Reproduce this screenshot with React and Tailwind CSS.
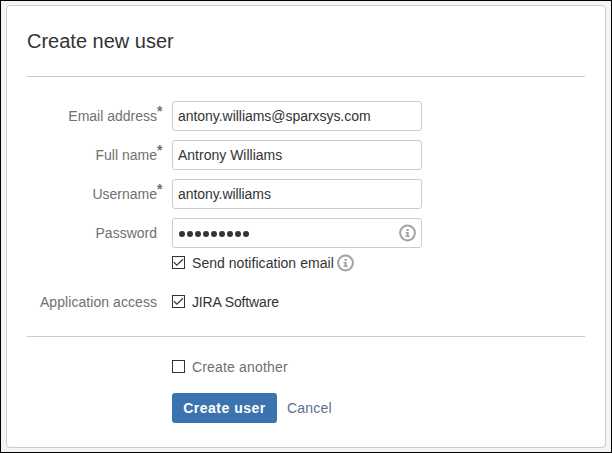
const InfoIcon = ({ className = "" }) => (
  <svg width="17" height="18" viewBox="0 0 17 18" className={`shrink-0 ${className}`} aria-hidden="true">
    <circle cx="8.5" cy="9" r="7.4" fill="none" stroke="#a3a3a6" strokeWidth="2" />
    <path d="M7.5 5h2.2v2H7.5zM6.5 8h3.2v3.7h1V13H6.5v-1.3h1V9.2h-1z" fill="#a3a3a6" />
  </svg>
);

const Checkbox = ({ checked = false }) => (
  <svg width="13" height="13" viewBox="0 0 13 13" className="mb-px shrink-0" role="checkbox" aria-checked={checked}>
    <rect x="0.5" y="0.5" width="12" height="12" fill="#fff" stroke="#333" />
    {checked && <path d="M1.8 6.2 4.8 9.2l6.2-6" fill="none" stroke="#333" strokeWidth="1.2" />}
  </svg>
);

const Row = ({ label, required, children }) => (
  <div className="flex h-[30px]">
    <div className="relative mr-[15px] w-[130px] shrink-0 text-right leading-[30px] text-[#707070]">
      {label}
      {required && <span className="absolute -top-[5px] left-full font-bold text-[#707070]">*</span>}
    </div>
    {children}
  </div>
);

const Field = ({ children }) => (
  <div className="flex h-[30px] w-[250px] items-center justify-between rounded-[3px] border border-[#ccc] bg-white pr-[5px] pl-[5px]">
    {children}
  </div>
);

export default function App() {
  return (
    <div className="h-[453px] w-[612px] border border-black bg-[#f5f4f5] pt-1 pl-[5px] font-['Liberation_Sans',Arial,sans-serif] text-[14px] text-[#333]">
      <div className="h-[443px] w-[600px] rounded-[4px] border border-[#ccc] bg-white px-5">
        <h1 className="flex h-[71px] items-center border-b border-[#ccc] text-[20px]">Create new user</h1>
        <div className="flex h-[260px] flex-col border-b border-[#ccc] pt-6">
          <div className="flex flex-col gap-[9px]">
            <Row label="Email address" required>
              <Field>
                <span className="tracking-[-0.04px]">antony.williams@sparxsys.com</span>
              </Field>
            </Row>
            <Row label="Full name" required>
              <Field>Antrony Williams</Field>
            </Row>
            <Row label="Username" required>
              <Field>
                <span className="tracking-[-0.07px]">antony.williams</span>
              </Field>
            </Row>
            <Row label="Password">
              <Field>
                <span className="flex gap-[2px] pt-[2px] pl-[1px]">
                  {Array.from({ length: 9 }, (_, i) => (
                    <span key={i} className="size-[6px] rounded-full bg-[#333]" />
                  ))}
                </span>
                <InfoIcon />
              </Field>
            </Row>
          </div>
          <div className="mt-[5px] ml-[145px] flex h-5 items-center">
            <Checkbox checked />
            <span className="mr-[3px] ml-[7px] tracking-[0.04px]">Send notification email</span>
            <InfoIcon />
          </div>
          <div className="mt-[14px]">
            <Row label={<span className="tracking-[0.06px]">Application access</span>}>
              <div className="flex items-center gap-[7px]">
                <Checkbox checked />
                <span className="tracking-[-0.14px]">JIRA Software</span>
              </div>
            </Row>
          </div>
        </div>
        <div className="ml-[145px] pt-5">
          <div className="flex h-5 items-center gap-[7px] text-[#707070]">
            <Checkbox />
            <span className="tracking-[0.17px]">Create another</span>
          </div>
          <div className="mt-4 flex items-center">
            <button className="h-[30px] w-[105px] rounded-[3px] bg-[#3b73af] font-bold tracking-[0.5px] text-white">
              Create user
            </button>
            <a className="ml-[10px] tracking-[0.2px] text-[#5a6f8e]">Cancel</a>
          </div>
        </div>
      </div>
    </div>
  );
}
